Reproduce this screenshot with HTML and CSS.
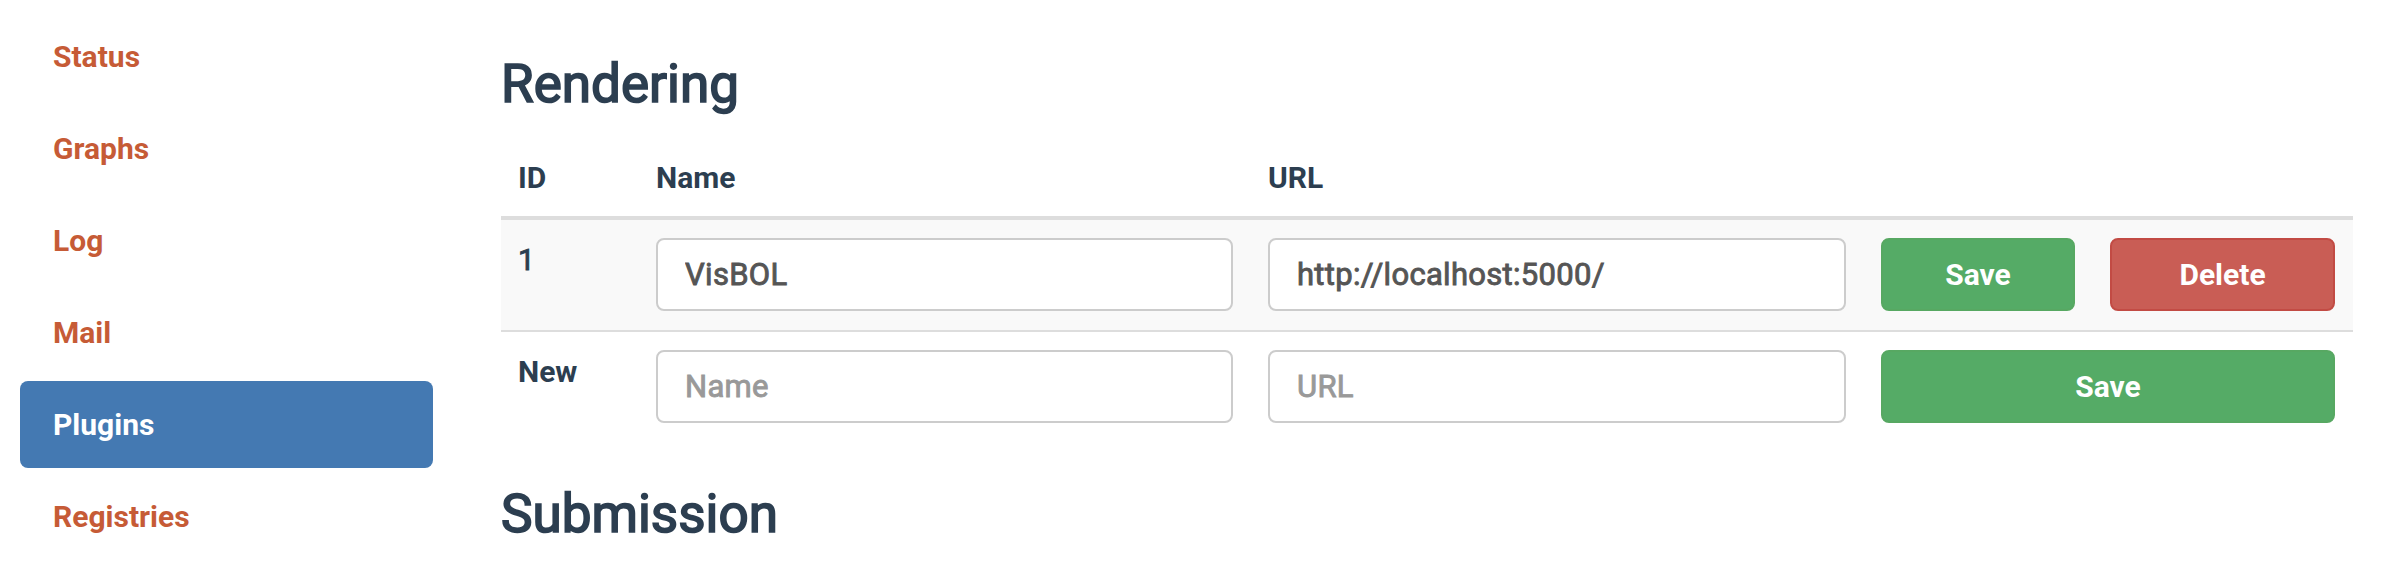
FILE: index.html
```html
<!DOCTYPE html>
<html>
<head>
<meta charset="utf-8">
<link rel="stylesheet" href="styles.css">
</head>
<body>
<div class="page">
  <nav class="sidebar">
    <a class="nav-link">Status</a>
    <a class="nav-link">Graphs</a>
    <a class="nav-link">Log</a>
    <a class="nav-link">Mail</a>
    <a class="nav-link active">Plugins</a>
    <a class="nav-link">Registries</a>
  </nav>
  <main class="content">
    <h3 class="section-title">Rendering</h3>
    <table class="plugins">
      <colgroup>
        <col class="c-id"><col class="c-name"><col class="c-url"><col class="c-btn">
      </colgroup>
      <thead>
        <tr><th>ID</th><th>Name</th><th>URL</th><th></th></tr>
      </thead>
      <tbody>
        <tr class="striped">
          <td class="id">1</td>
          <td><input class="field" type="text" value="VisBOL"></td>
          <td><input class="field" type="text" value="http://localhost:5000/"></td>
          <td><div class="actions"><button class="btn btn-save">Save</button><button class="btn btn-delete">Delete</button></div></td>
        </tr>
        <tr>
          <th class="id">New</th>
          <td><input class="field" type="text" placeholder="Name"></td>
          <td><input class="field" type="text" placeholder="URL"></td>
          <td><button class="btn btn-save btn-wide">Save</button></td>
        </tr>
      </tbody>
    </table>
    <h3 class="section-title second">Submission</h3>
  </main>
</div>
</body>
</html>
```

FILE: styles.css
```css
* { box-sizing: border-box; }
html, body { margin: 0; padding: 0; background: #fff; }
body {
  font-family: Roboto, "Liberation Sans", Arial, sans-serif;
  font-size: 30px;
  line-height: 43px;
  font-weight: 400;
  color: #2c3e50;
  overflow: hidden;
}
.page {
  display: flex;
  align-items: flex-start;
}
.sidebar {
  display: flex;
  flex-direction: column;
  gap: 5px;
  width: 433px;
  padding: 13px 0 0 20px;
  flex: none;
}
.nav-link {
  display: block;
  padding: 22px 33px;
  line-height: 43px;
  font-weight: 700;
  color: #c65b36;
  border-radius: 8px;
  text-decoration: none;
}
.nav-link.active {
  background: #4479b2;
  color: #fff;
}
.content {
  margin-left: 68px;
  width: 1852px;
  flex: none;
}
.section-title {
  margin: 54px 0 25px;
  font-size: 53px;
  line-height: 60px;
  font-weight: 400;
  -webkit-text-stroke: 1.7px #2c3e50;
  color: #2c3e50;
}
.section-title.second {
  margin-top: 42px;
}
.plugins {
  width: 1852px;
  table-layout: fixed;
  border-collapse: collapse;
  border-spacing: 0;
}
.c-id { width: 138px; }
.c-name { width: 612px; }
.c-url { width: 613px; }
.c-btn { width: 489px; }
.plugins th, .plugins td {
  padding: 18px 18px 19px 17px;
  text-align: left;
  vertical-align: top;
}
.plugins thead th {
  font-weight: 700;
  vertical-align: bottom;
  padding: 17px 18px 17px 17px;
  border-bottom: 4px solid #ddd;
}
.plugins tbody tr + tr td,
.plugins tbody tr + tr th {
  border-top: 2px solid #ddd;
}
.plugins tbody th { font-weight: 700; }
.plugins td.id {
  font-weight: 400;
  -webkit-text-stroke: 0.9px #2c3e50;
}
.striped { background: #f9f9f9; }
.field {
  display: block;
  width: 100%;
  height: 73px;
  margin: 0;
  padding: 0 27px;
  border: 2px solid #ccc;
  border-radius: 8px;
  background: #fff;
  font-family: inherit;
  font-size: 31px;
  font-weight: 400;
  letter-spacing: 0.3px;
  color: #555;
  -webkit-text-stroke: 0.9px #555;
  outline: none;
}
.field::placeholder {
  color: #999;
  -webkit-text-stroke: 0.9px #999;
  opacity: 1;
}
.actions {
  display: flex;
  justify-content: space-between;
}
.btn {
  display: block;
  height: 73px;
  margin: 0;
  padding: 0;
  border-radius: 8px;
  font-family: inherit;
  font-size: 30px;
  font-weight: 700;
  color: #fff;
  cursor: pointer;
}
.btn-save {
  width: 194px;
  background: #55ab66;
  border: 2px solid #57a862;
}
.btn-delete {
  width: 225px;
  background: #c95d55;
  border: 2px solid #c24b44;
}
.btn-wide { width: 100%; }
```
